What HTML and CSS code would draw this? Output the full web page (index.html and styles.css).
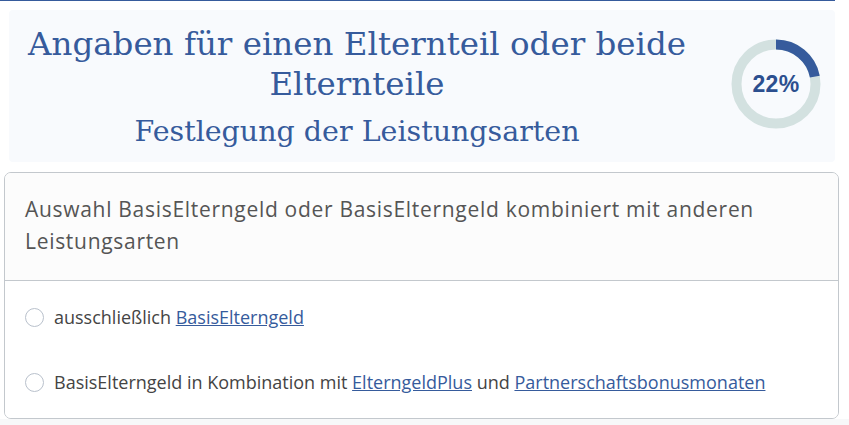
FILE: index.html
```html
<!DOCTYPE html>
<html lang="de">
<head>
    <meta charset="UTF-8" />
    <title>Elterngeld</title>
    <link rel="stylesheet" href="styles.css">
</head>
<body>
    <div class="page">
        <div class="topline"></div>
        <div class="header">
            <div class="titles">
                <h1>Angaben für einen Elternteil oder beide Elternteile</h1>
                <h2>Festlegung der Leistungsarten</h2>
            </div>
            <div class="progress">
                <svg width="90" height="90" viewBox="0 0 90 90">
                    <circle cx="45" cy="45" r="39.5" fill="none" stroke="#d3e1e0" stroke-width="10"></circle>
                    <circle cx="45" cy="45" r="39.5" fill="none" stroke="#365b9c" stroke-width="10"
                        stroke-dasharray="54.6 400" transform="rotate(-90 45 45)"></circle>
                </svg>
                <span class="percent">22%</span>
            </div>
        </div>
        <div class="card">
            <div class="cardHead">Auswahl BasisElterngeld oder BasisElterngeld kombiniert mit anderen Leistungsarten</div>
            <div class="cardBody">
                <label class="option">
                    <input type="radio" name="art">
                    <span>ausschließlich <a href="#">BasisElterngeld</a></span>
                </label>
                <label class="option">
                    <input type="radio" name="art">
                    <span>BasisElterngeld in Kombination mit <a href="#">ElterngeldPlus</a> und <a href="#">Partnerschaftsbonusmonaten</a></span>
                </label>
            </div>
        </div>
        <div class="below"></div>
    </div>
</body>
</html>
```
FILE: styles.css
```css
body {
    margin: 0;
    background: #ffffff;
    font-family: "Open Sans", "Noto Sans", sans-serif;
}
.page {
    width: 849px;
}
.topline {
    width: 835px;
    height: 1px;
    background: #365b9c;
}
.header {
    display: flex;
    align-items: center;
    width: 826px;
    box-sizing: border-box;
    margin: 9px 0 0 9px;
    padding: 14px 14px 12px 0;
    background: #f8fafd;
    border-radius: 4px;
}
.titles {
    flex: 1;
    text-align: center;
    color: #365b9c;
    font-family: "DejaVu Serif", "Liberation Serif", serif;
}
h1 {
    margin: 0;
    font-size: 32.5px;
    font-weight: normal;
    line-height: 40px;
}
h2 {
    margin: 10px 0 0;
    font-size: 28.5px;
    font-weight: normal;
    line-height: 36px;
}
.progress {
    position: relative;
    width: 90px;
    height: 90px;
    margin: -7px 0 0 26px;
}
.progress svg {
    display: block;
}
.percent {
    position: absolute;
    top: 0;
    left: 0;
    width: 90px;
    line-height: 90px;
    text-align: center;
    font-family: "Liberation Sans", sans-serif;
    font-weight: bold;
    font-size: 23px;
    letter-spacing: 0.3px;
    color: #2c4f8f;
}
.card {
    width: 835px;
    box-sizing: border-box;
    margin: 10px 0 0 4px;
    border: 1px solid #c3c8cd;
    border-radius: 7px;
    overflow: hidden;
}
.cardHead {
    padding: 20px 20px 23px;
    background: #fcfcfc;
    border-bottom: 1px solid #c3c8cd;
    color: #555555;
    font-size: 21px;
    letter-spacing: 0.7px;
    line-height: 32px;
}
.cardBody {
    padding: 24px 20px 24px;
    background: #ffffff;
}
.option {
    display: flex;
    align-items: center;
    gap: 10px;
    color: #444444;
    font-size: 18px;
    line-height: 24px;
}
.option + .option {
    margin-top: 41px;
}
.option input {
    appearance: none;
    margin: 0;
    width: 19px;
    height: 19px;
    border: 1px solid #b9c1cc;
    border-radius: 50%;
    background: #ffffff;
}
a {
    color: #365b9c;
}
.below {
    height: 10px;
    background: #f7f8f9;
}
```
